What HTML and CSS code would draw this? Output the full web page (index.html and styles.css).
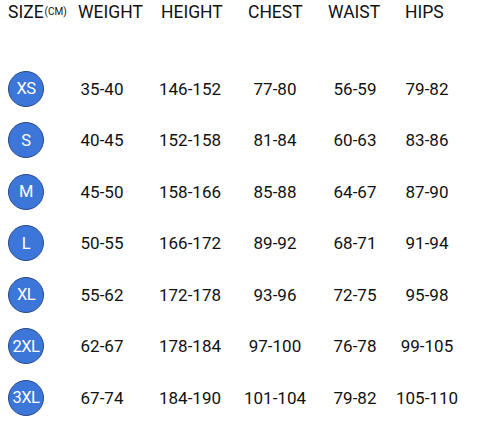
FILE: index.html
```html
<!DOCTYPE html>
<html>
<head>
<meta charset="utf-8">
<link rel="stylesheet" href="styles.css">
</head>
<body>
<div class="chart">
  <div class="head">
    <div class="h">SIZE<span class="unit">(CM)</span></div>
    <div class="h">WEIGHT</div>
    <div class="h">HEIGHT</div>
    <div class="h">CHEST</div>
    <div class="h">WAIST</div>
    <div class="h">HIPS</div>
  </div>
  <div class="rows">
    <div class="row"><div class="size"><span class="dot">XS</span></div><div>35-40</div><div>146-152</div><div>77-80</div><div>56-59</div><div>79-82</div></div>
    <div class="row"><div class="size"><span class="dot">S</span></div><div>40-45</div><div>152-158</div><div>81-84</div><div>60-63</div><div>83-86</div></div>
    <div class="row"><div class="size"><span class="dot">M</span></div><div>45-50</div><div>158-166</div><div>85-88</div><div>64-67</div><div>87-90</div></div>
    <div class="row"><div class="size"><span class="dot">L</span></div><div>50-55</div><div>166-172</div><div>89-92</div><div>68-71</div><div>91-94</div></div>
    <div class="row"><div class="size"><span class="dot">XL</span></div><div>55-62</div><div>172-178</div><div>93-96</div><div>72-75</div><div>95-98</div></div>
    <div class="row"><div class="size"><span class="dot">2XL</span></div><div>62-67</div><div>178-184</div><div>97-100</div><div>76-78</div><div>99-105</div></div>
    <div class="row"><div class="size"><span class="dot">3XL</span></div><div>67-74</div><div>184-190</div><div>101-104</div><div>79-82</div><div>105-110</div></div>
  </div>
</div>
</body>
</html>
```
FILE: styles.css
```css
html, body {
  margin: 0;
  padding: 0;
  background: #fff;
}
body {
  width: 480px;
  height: 426px;
  overflow: hidden;
  font-family: Roboto, "Liberation Sans", sans-serif;
  color: #111;
}
.head {
  display: grid;
  grid-template-columns: 70px 83px 87px 80px 77px 1fr;
  padding-left: 8px;
  height: 62.75px;
  box-sizing: border-box;
  padding-top: 2px;
  font-size: 17.5px;
  line-height: 20px;
}
.unit {
  font-size: 10px;
  vertical-align: 3px;
  margin-left: 1px;
}
.rows {
  display: flex;
  flex-direction: column;
}
.row {
  display: grid;
  grid-template-columns: 52px 100px 76px 94px 66px 78px;
  height: 51.5px;
  align-items: center;
  text-align: center;
  font-size: 17px;
}
.size {
  display: flex;
  justify-content: center;
}
.dot {
  width: 34px;
  height: 34px;
  border-radius: 50%;
  background: #3d76d9;
  border: 1.5px solid #27498a;
  color: #fff;
  font-size: 16.5px;
  display: flex;
  align-items: center;
  justify-content: center;
  letter-spacing: -0.5px;
}
```
